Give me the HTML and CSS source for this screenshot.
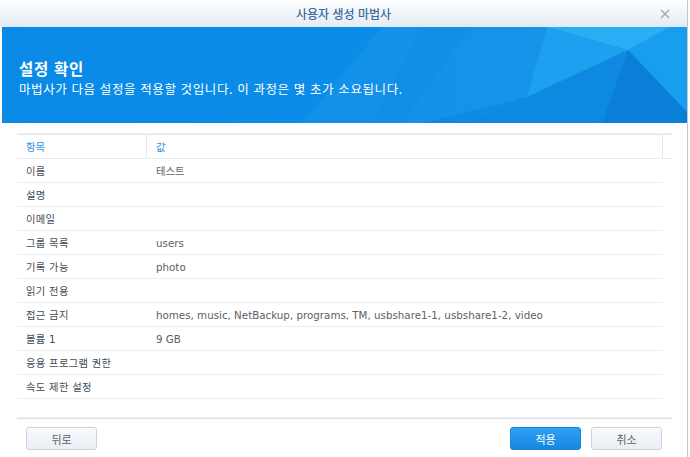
FILE: index.html
```html
<!DOCTYPE html>
<html lang="ko">
<head>
<meta charset="utf-8">
<title>사용자 생성 마법사</title>
<link rel="stylesheet" href="styles.css">
</head>
<body>
<div class="window">
  <div class="titlebar">
    <span></span>
    <span class="title">사용자 생성 마법사</span>
    <span class="close" aria-label="닫기">
      <svg width="10" height="10" viewBox="0 0 10 10"><path d="M1 1 L9 9 M9 1 L1 9" stroke="#9aa3ab" stroke-width="1.2" fill="none"/></svg>
    </span>
  </div>
  <div class="banner">
    <svg class="facets" viewBox="0 0 685 96" preserveAspectRatio="none">
      <polygon points="380,0 545,0 525,70 468,96 300,96" fill="#ffffff" opacity="0.04"/>
      <polygon points="545,0 668,0 626,23" fill="#3fc0f8" opacity="0.6"/>
      <polygon points="545,0 626,23 525,70" fill="#2bb0f4" opacity="0.5"/>
      <polygon points="668,0 685,0 685,85 626,23" fill="#1fa4ef" opacity="0.65"/>
      <polygon points="626,23 685,85 685,96 600,96" fill="#0a78d2" opacity="0.75"/>
      <polygon points="626,23 600,96 468,96 525,70" fill="#0f86dc" opacity="0.65"/>
      <polygon points="525,70 468,96 420,96" fill="#0b7dd6" opacity="0.4"/>
      <polygon points="420,0 470,0 400,96 370,96" fill="#0a7fd8" opacity="0.15"/>
    </svg>
    <div class="banner-text">
      <h1>설정 확인</h1>
      <p>마법사가 다음 설정을 적용할 것입니다. 이 과정은 몇 초가 소요됩니다.</p>
    </div>
  </div>
  <div class="content">
    <div class="grid">
      <div class="head">
        <div class="cell key">항목</div>
        <div class="cell val">값</div>
        <div class="gutter"></div>
      </div>
      <div class="row"><div class="cell key">이름</div><div class="cell val">테스트</div></div>
      <div class="row"><div class="cell key">설명</div><div class="cell val"></div></div>
      <div class="row"><div class="cell key">이메일</div><div class="cell val"></div></div>
      <div class="row"><div class="cell key">그룹 목록</div><div class="cell val">users</div></div>
      <div class="row"><div class="cell key">기록 가능</div><div class="cell val">photo</div></div>
      <div class="row"><div class="cell key">읽기 전용</div><div class="cell val"></div></div>
      <div class="row"><div class="cell key">접근 금지</div><div class="cell val">homes, music, NetBackup, programs, TM, usbshare1-1, usbshare1-2, video</div></div>
      <div class="row"><div class="cell key">볼륨 1</div><div class="cell val">9 GB</div></div>
      <div class="row"><div class="cell key">응용 프로그램 권한</div><div class="cell val"></div></div>
      <div class="row"><div class="cell key">속도 제한 설정</div><div class="cell val"></div></div>
    </div>
  </div>
  <div class="footer">
    <button class="btn">뒤로</button>
    <div class="spacer"></div>
    <button class="btn primary">적용</button>
    <button class="btn">취소</button>
  </div>
</div>
</body>
</html>
```
FILE: styles.css
```css
html, body {
  margin: 0;
  padding: 0;
  background: #ffffff;
}
body {
  font-family: "DejaVu Sans", "Noto Sans CJK KR", sans-serif;
  width: 690px;
  height: 457px;
  overflow: hidden;
}
.window {
  width: 687px;
  height: 457px;
  border-right: 1px solid #c4c8cc;
  display: flex;
  flex-direction: column;
  background: #fff;
}
.titlebar {
  height: 27px;
  display: grid;
  grid-template-columns: 1fr auto 1fr;
  align-items: center;
  background: linear-gradient(to bottom, #ffffff 0%, #eef3f8 60%, #e2eaf3 100%);
}
.title {
  font-family: "Noto Sans CJK KR", sans-serif;
  font-size: 12px;
  color: #3a6b9f;
  font-weight: 500;
}
.close {
  justify-self: end;
  margin-right: 17px;
  display: flex;
}
.banner {
  position: relative;
  height: 96px;
  margin-left: 2px;
  background: linear-gradient(to right, #0a8ae6 0%, #0a8de8 55%, #0e93eb 100%);
  overflow: hidden;
  color: #fff;
  font-family: "Noto Sans CJK KR", sans-serif;
}
.facets {
  position: absolute;
  inset: 0;
  width: 100%;
  height: 100%;
}
.banner-text {
  position: relative;
  padding: 30px 0 0 17px;
}
.banner h1 {
  margin: 0;
  font-size: 15.5px;
  font-weight: 700;
  line-height: 23px;
  letter-spacing: 0.7px;
}
.banner p {
  margin: 0;
  font-size: 12.5px;
  line-height: 18px;
  letter-spacing: 0.6px;
}
.content {
  padding: 11px 15px 0 17px;
  height: 284px;
}
.grid {
  display: flex;
  flex-direction: column;
}
.head {
  display: grid;
  grid-template-columns: 130px 1fr 9px;
  height: 23px;
  border-top: 1px solid #e3e6e9;
  border-bottom: 1px solid #e8ebee;
  box-shadow: 0 -1px 0 #f0f2f4;
  align-items: center;
}
.head .cell {
  color: #3390dc;
  height: 23px;
  display: flex;
  align-items: center;
}
.head .key {
  border-right: 1px solid #e2e9f0;
}
.head .val {
  border-right: 1px solid #e6e9ec;
}
.row {
  display: grid;
  grid-template-columns: 130px 1fr;
  height: 23px;
  border-bottom: 1px solid #ebedef;
  margin-right: 9px;
  align-items: center;
}
.cell {
  font-size: 10.3px;
  padding-left: 9px;
  white-space: nowrap;
}
.row .key {
  color: #424d58;
  letter-spacing: 0.3px;
}
.row .val {
  color: #5c6166;
}
.footer {
  margin: 0 15px 0 17px;
  border-top: 1px solid #dcdfe2;
  box-shadow: 0 -1px 0 #eef0f2;
  padding-top: 8px;
  display: flex;
  gap: 10px;
}
.spacer {
  flex: 1;
}
.btn {
  width: 71px;
  height: 23px;
  font-family: "Noto Sans CJK KR", sans-serif;
  font-size: 11px;
  color: #5a6168;
  border: 1px solid #c9d2db;
  border-radius: 3px;
  background: linear-gradient(to bottom, #f8fafc, #e9eef3);
  padding: 0;
}
.btn:first-child {
  margin-left: 9px;
}
.btn.primary {
  color: #fff;
  border-color: #1682d8;
  background: linear-gradient(to bottom, #2fa0f2, #1688e2);
}
.btn:last-child {
  margin-right: 10px;
}
```
